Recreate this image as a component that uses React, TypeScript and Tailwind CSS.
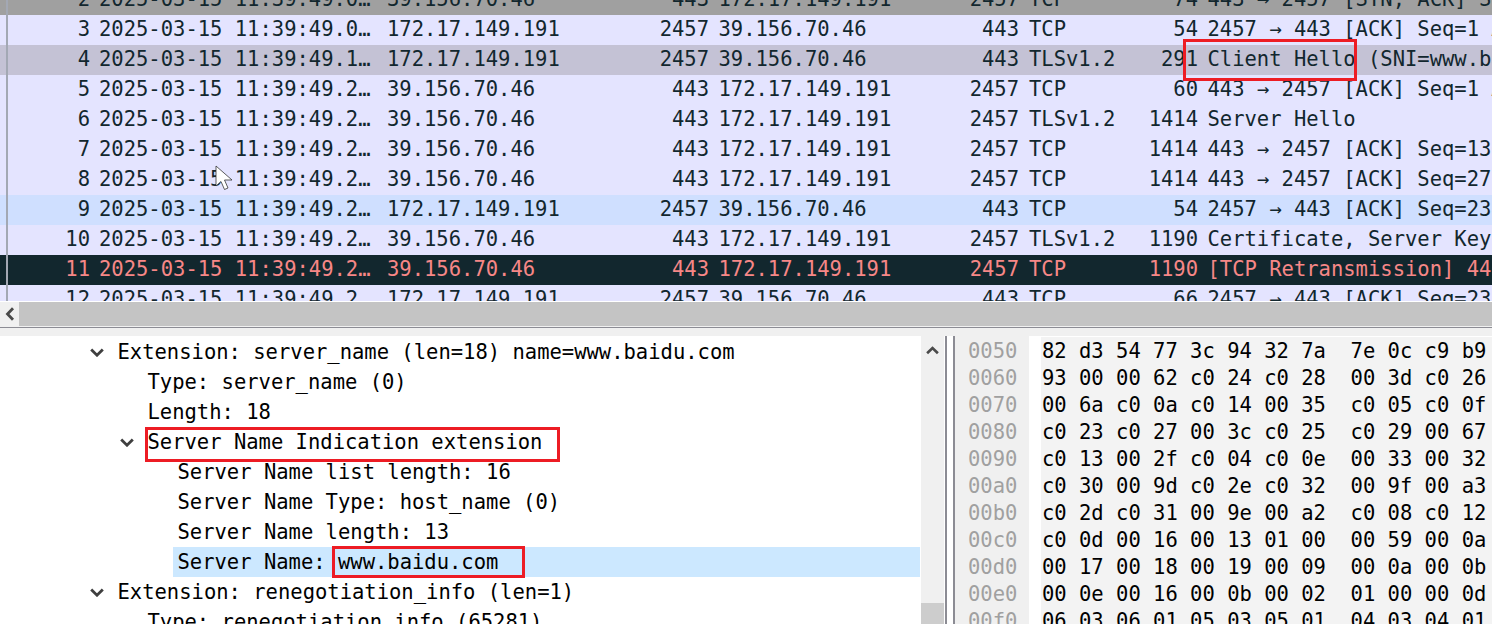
const mono = "font-['DejaVu_Sans_Mono',monospace] text-[20.5px] leading-[30px] whitespace-pre"

const packets = [
  { no: "2", time: "2025-03-15 11:39:49.0…", src: "39.156.70.46", sport: "443", dst: "172.17.149.191", dport: "2457", proto: "TCP", len: "74", info: "443 → 2457 [SYN, ACK] Seq=0", row: "bg-[#a0a0a0] text-[#12272e]" },
  { no: "3", time: "2025-03-15 11:39:49.0…", src: "172.17.149.191", sport: "2457", dst: "39.156.70.46", dport: "443", proto: "TCP", len: "54", info: "2457 → 443 [ACK] Seq=1 Ack=1", row: "bg-[#e4e4ff] text-[#12272e]" },
  { no: "4", time: "2025-03-15 11:39:49.1…", src: "172.17.149.191", sport: "2457", dst: "39.156.70.46", dport: "443", proto: "TLSv1.2", len: "291", info: "Client Hello (SNI=www.baidu.com)", row: "bg-[#c4c2d5] text-[#12272e]" },
  { no: "5", time: "2025-03-15 11:39:49.2…", src: "39.156.70.46", sport: "443", dst: "172.17.149.191", dport: "2457", proto: "TCP", len: "60", info: "443 → 2457 [ACK] Seq=1 Ack=238", row: "bg-[#e4e4ff] text-[#12272e]" },
  { no: "6", time: "2025-03-15 11:39:49.2…", src: "39.156.70.46", sport: "443", dst: "172.17.149.191", dport: "2457", proto: "TLSv1.2", len: "1414", info: "Server Hello", row: "bg-[#e4e4ff] text-[#12272e]" },
  { no: "7", time: "2025-03-15 11:39:49.2…", src: "39.156.70.46", sport: "443", dst: "172.17.149.191", dport: "2457", proto: "TCP", len: "1414", info: "443 → 2457 [ACK] Seq=1361 Ack=238", row: "bg-[#e4e4ff] text-[#12272e]" },
  { no: "8", time: "2025-03-15 11:39:49.2…", src: "39.156.70.46", sport: "443", dst: "172.17.149.191", dport: "2457", proto: "TCP", len: "1414", info: "443 → 2457 [ACK] Seq=2721 Ack=238", row: "bg-[#e4e4ff] text-[#12272e]" },
  { no: "9", time: "2025-03-15 11:39:49.2…", src: "172.17.149.191", sport: "2457", dst: "39.156.70.46", dport: "443", proto: "TCP", len: "54", info: "2457 → 443 [ACK] Seq=238 Ack=4081", row: "bg-[#cfdfff] text-[#12272e]" },
  { no: "10", time: "2025-03-15 11:39:49.2…", src: "39.156.70.46", sport: "443", dst: "172.17.149.191", dport: "2457", proto: "TLSv1.2", len: "1190", info: "Certificate, Server Key Exchange", row: "bg-[#e4e4ff] text-[#12272e]" },
  { no: "11", time: "2025-03-15 11:39:49.2…", src: "39.156.70.46", sport: "443", dst: "172.17.149.191", dport: "2457", proto: "TCP", len: "1190", info: "[TCP Retransmission] 443 → 2457", row: "bg-[#12272e] text-[#f78787]" },
  { no: "12", time: "2025-03-15 11:39:49.2…", src: "172.17.149.191", sport: "2457", dst: "39.156.70.46", dport: "443", proto: "TCP", len: "66", info: "2457 → 443 [ACK] Seq=238 Ack=5217", row: "bg-[#e4e4ff] text-[#12272e]" },
]

const tree = [
  { text: "Extension: server_name (len=18) name=www.baidu.com", indent: "pl-[117.5px]", open: "left-[90px]" },
  { text: "Type: server_name (0)", indent: "pl-[147.5px]" },
  { text: "Length: 18", indent: "pl-[147.5px]" },
  { text: "Server Name Indication extension", indent: "pl-[147.5px]", open: "left-[120px]" },
  { text: "Server Name list length: 16", indent: "pl-[177.5px]" },
  { text: "Server Name Type: host_name (0)", indent: "pl-[177.5px]" },
  { text: "Server Name length: 13", indent: "pl-[177.5px]" },
  { text: "Server Name: www.baidu.com", indent: "pl-[177.5px]", selected: true },
  { text: "Extension: renegotiation_info (len=1)", indent: "pl-[117.5px]", open: "left-[90px]" },
  { text: "Type: renegotiation_info (65281)", indent: "pl-[147.5px]" },
]

const hex = [
  ["0050", "82 d3 54 77 3c 94 32 7a  7e 0c c9 b9"],
  ["0060", "93 00 00 62 c0 24 c0 28  00 3d c0 26"],
  ["0070", "00 6a c0 0a c0 14 00 35  c0 05 c0 0f"],
  ["0080", "c0 23 c0 27 00 3c c0 25  c0 29 00 67"],
  ["0090", "c0 13 00 2f c0 04 c0 0e  00 33 00 32"],
  ["00a0", "c0 30 00 9d c0 2e c0 32  00 9f 00 a3"],
  ["00b0", "c0 2d c0 31 00 9e 00 a2  c0 08 c0 12"],
  ["00c0", "c0 0d 00 16 00 13 01 00  00 59 00 0a"],
  ["00d0", "00 17 00 18 00 19 00 09  00 0a 00 0b"],
  ["00e0", "00 0e 00 16 00 0b 00 02  01 00 00 0d"],
  ["00f0", "06 03 06 01 05 03 05 01  04 03 04 01"],
]

function Chevron({ className }: { className: string }) {
  return (
    <svg viewBox="0 0 14 9" fill="none" className={className}>
      <path d="M1.200 1.500L7 7.200l5.800-5.700" stroke="#3f3f3f" strokeWidth="2.800" />
    </svg>
  )
}

function PacketRow({ p }: { p: (typeof packets)[number] }) {
  return (
    <div className={`flex h-[30px] shrink-0 overflow-hidden ${mono} !leading-[28px] ${p.row}`}>
      <span className="w-[90px] shrink-0 text-right">{p.no}</span>
      <span className="ml-[9px] w-[288px] shrink-0">{p.time}</span>
      <span className="w-[220px] shrink-0">{p.src}</span>
      <span className="w-[102px] shrink-0 text-right">{p.sport}</span>
      <span className="ml-[9.5px] w-[240.5px] shrink-0">{p.dst}</span>
      <span className="w-[60px] shrink-0 text-right">{p.dport}</span>
      <span className="ml-[10px] w-[91px] shrink-0">{p.proto}</span>
      <span className="w-[78px] shrink-0 text-right">{p.len}</span>
      <span className="ml-[9.5px] shrink-0">{p.info}</span>
    </div>
  )
}

export default function App() {
  return (
    <div className="flex h-[624px] w-[1492px] flex-col overflow-hidden bg-white">
      {/* packet list */}
      <div className="relative h-[301px] shrink-0 overflow-hidden">
        <div className="-mt-[15px] flex flex-col">
          {packets.map((p) => (
            <PacketRow key={p.no} p={p} />
          ))}
        </div>
        <div className="absolute inset-y-0 left-[6px] w-[2px] bg-[#a3a8b4]" />
        <div className="absolute left-[1183px] top-[39px] h-[42px] w-[174px] border-[3px] border-[#ed1c24]" />
        <svg viewBox="0 0 18 28" className="absolute left-[215px] top-[165px] h-[28px] w-[18px]">
          <path d="M1 1v20l5-4.500 3.500 8 3.500-1.500-3.500-8H17z" fill="#fff" stroke="#333" strokeWidth="0.800" />
        </svg>
      </div>

      {/* horizontal scrollbar */}
      <div className="h-[1px] shrink-0 bg-white" />
      <div className="flex h-[24px] shrink-0 bg-[#f0f0f0]">
        <div className="flex w-[19px] items-center justify-center">
          <svg viewBox="0 0 9 14" fill="none" className="h-[14px] w-[10px]">
            <path d="M7.500 1.200L2 7l5.500 5.800" stroke="#4a4a4a" strokeWidth="2.800" />
          </svg>
        </div>
        <div className="flex-1 bg-[#c4c4c4]" />
      </div>
      <div className="h-[2px] shrink-0 border-b border-[#8c8c94] bg-[#f0f0f0]" />
      <div className="h-[8px] shrink-0 bg-[#f0f0f0]" />

      {/* details and bytes */}
      <div className="flex min-h-0 flex-1">
        <div className="relative w-[921px] shrink-0 overflow-hidden pt-[1px]">
          {tree.map((t) => (
            <div key={t.text} className={`relative h-[30px] ${t.indent} ${mono} text-black`}>
              {t.selected && <div className="absolute inset-y-0 left-[173px] right-[1px] bg-[#cce8ff]" />}
              {t.open && <Chevron className={`absolute top-[11px] h-[9px] w-[14px] ${t.open}`} />}
              <span className="relative">{t.text}</span>
            </div>
          ))}
          <div className="absolute left-[145px] top-[91px] h-[35px] w-[415px] border-[3px] border-[#ed1c24]" />
          <div className="absolute left-[332px] top-[210px] h-[32px] w-[193px] border-[3px] border-[#ed1c24]" />
        </div>

        <div className="flex w-[23px] shrink-0 flex-col justify-between bg-[#f0f0f0]">
          <div className="flex h-[28px] items-center justify-center">
            <svg viewBox="0 0 14 9" fill="none" className="h-[9px] w-[13px]">
              <path d="M1.200 7.500L7 1.800l5.800 5.700" stroke="#4a4a4a" strokeWidth="2.800" />
            </svg>
          </div>
          <div className="h-[21px] bg-[#cdcdcd]" />
        </div>

        <div className="ml-[1px] w-[10px] shrink-0 border-x-2 border-[#8c8c94] bg-white" />

        <div className="flex min-w-0 flex-1">
          <div className="w-[74px] shrink-0 bg-[#f0f0f0] pl-[13px] pt-[2px]">
            {hex.map(([offset]) => (
              <div key={offset} className={`h-[27px] ${mono} !leading-[27px] text-[#a0a0a0]`}>
                {offset}
              </div>
            ))}
          </div>
          <div className="ml-[12px] mt-[1px] flex-1 overflow-hidden bg-[#f3f3f3] pl-[1px] pt-[1px]">
            {hex.map(([offset, bytes]) => (
              <div key={offset} className={`h-[27px] ${mono} !leading-[27px] text-black`}>
                {bytes}
              </div>
            ))}
          </div>
        </div>
      </div>
    </div>
  )
}
